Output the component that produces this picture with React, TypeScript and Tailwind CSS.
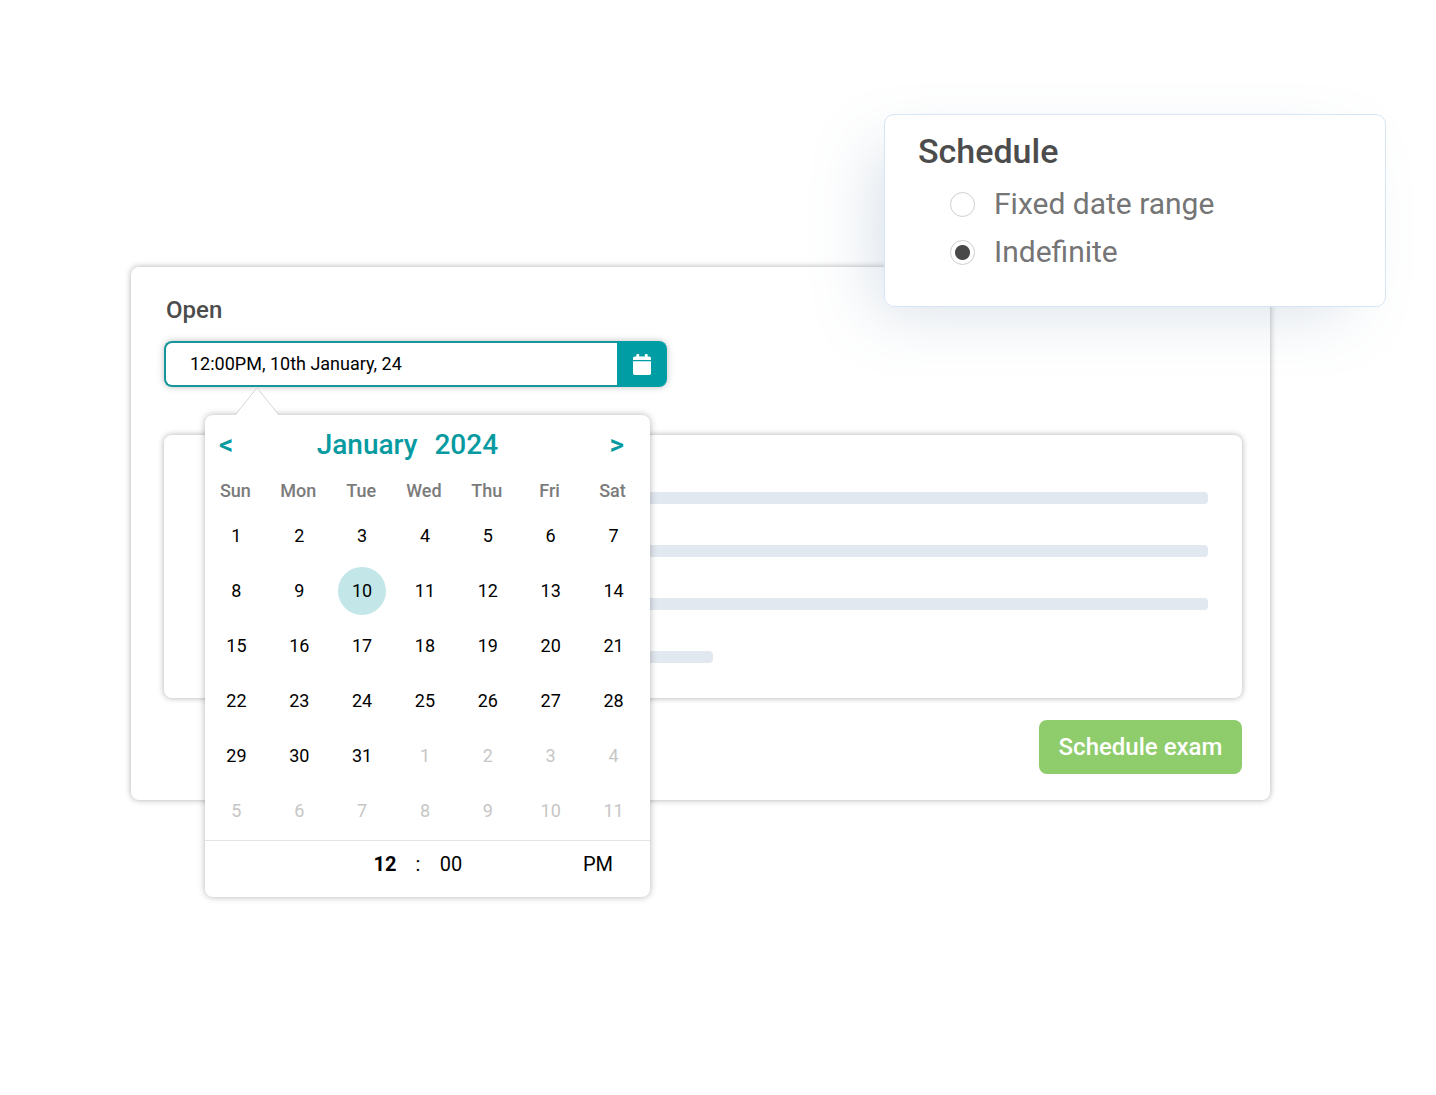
import { useState } from "react";

const weekdays = ["Sun", "Mon", "Tue", "Wed", "Thu", "Fri", "Sat"];

type Day = { day: number; outside: boolean };

const days: Day[] = Array.from({ length: 42 }, (_, i) => ({
  day: i < 31 ? i + 1 : i - 30,
  outside: i >= 31,
}));

const weeks = Array.from({ length: 6 }, (_, w) => days.slice(w * 7, w * 7 + 7));

function CalendarIcon() {
  return (
    <svg viewBox="0 0 18 21" className="h-[21px] w-[18px]" fill="currentColor" aria-hidden="true">
      <path d="M0 6V4.200Q0 2.400 1.800 2.400H3.300V1Q3.300 0 4.300 0h.9Q6.200 0 6.200 1V2.400h5.600V1q0-1 1-1h.9q1 0 1 1v1.400h1.500Q18 2.400 18 4.200V6Z" />
      <path d="M0 7.200h18v12q0 1.800-1.800 1.800H1.800Q0 21 0 19.200Z" />
    </svg>
  );
}

function DatePicker() {
  const [selected, setSelected] = useState(9);
  return (
    <div className="absolute left-[41px] top-[74px] z-10 w-[445px] rounded-lg bg-white shadow-[0_0_7px_rgba(0,0,0,0.3)]">
      <svg
        viewBox="0 0 44 28"
        className="absolute -top-[27px] left-[30px] h-7 w-11"
        aria-hidden="true"
      >
        <path d="M0 28 22 0 44 28Z" fill="#fff" />
        <path d="M0 27 22 0 44 27" fill="none" stroke="#d4d4d4" />
      </svg>
      <div className="flex h-[59px] items-center px-[14px] text-[#079ba1]">
        <button type="button" aria-label="Previous month" className="text-[28px] font-semibold">
          &lt;
        </button>
        <h2 className="flex flex-1 justify-center gap-[17px] pr-7 text-[28px] font-medium leading-8">
          <span>January</span>
          <span>2024</span>
        </h2>
        <button type="button" aria-label="Next month" className="mr-3 text-[28px] font-semibold">
          &gt;
        </button>
      </div>
      <div className="border-b border-[#e4e4e4] pb-[2px] pr-[5px]">
        <table className="w-full table-fixed border-collapse text-center text-lg">
          <thead>
            <tr className="h-[34px]">
              {weekdays.map((name) => (
                <th key={name} scope="col" className="p-0 pr-[2px] font-medium text-[#7b7b7b]">
                  {name}
                </th>
              ))}
            </tr>
          </thead>
          <tbody>
            {weeks.map((week, w) => (
              <tr key={w} className="h-[55px]">
                {week.map(({ day, outside }, d) => {
                  const index = w * 7 + d;
                  const tone = outside
                    ? "text-[#c6c6c6]"
                    : index === selected
                      ? "bg-[#c3e7e8] text-black"
                      : "text-black";
                  return (
                    <td key={d} className="p-0">
                      <button
                        type="button"
                        onClick={() => setSelected(index)}
                        className={`mx-auto flex size-12 items-center justify-center rounded-full ${tone}`}
                      >
                        {day}
                      </button>
                    </td>
                  );
                })}
              </tr>
            ))}
          </tbody>
        </table>
      </div>
      <div className="flex h-14 items-center pb-[10px] pl-[164px] pr-9 text-xl text-black">
        <input
          aria-label="Hour"
          defaultValue="12"
          className="w-8 bg-transparent text-center font-bold outline-none"
        />
        <span className="w-[34px] text-center">:</span>
        <input
          aria-label="Minute"
          defaultValue="00"
          className="w-8 bg-transparent text-center outline-none"
        />
        <select
          aria-label="AM or PM"
          defaultValue="PM"
          className="ml-auto appearance-none bg-transparent outline-none"
        >
          <option>AM</option>
          <option>PM</option>
        </select>
      </div>
    </div>
  );
}

function ScheduleCard() {
  const [mode, setMode] = useState("indefinite");
  const options = [
    { id: "fixed", label: "Fixed date range" },
    { id: "indefinite", label: "Indefinite" },
  ];
  return (
    <fieldset className="absolute -right-[116px] -top-[153px] z-20 h-[193px] w-[502px] rounded-[10px] border border-[#d5e5f5] bg-white pl-[33px] shadow-[-24px_20px_64px_-16px_rgba(100,130,165,0.25)]">
      <legend className="float-left w-full pt-4 text-[34px] font-medium leading-10 text-[#4c4c4c]">
        Schedule
      </legend>
      <div className="clear-both flex flex-col pl-8 pt-[9px]">
        {options.map(({ id, label }) => (
          <label key={id} className="flex h-12 items-center gap-[19px] text-3xl text-[#757575]">
            <input
              type="radio"
              name="schedule"
              checked={mode === id}
              onChange={() => setMode(id)}
              className="size-[25px] appearance-none rounded-full border border-[#cfcfcf] bg-white checked:bg-[radial-gradient(circle,#484848_7px,#ffffff_8px)]"
            />
            {label}
          </label>
        ))}
      </div>
    </fieldset>
  );
}

export default function App() {
  return (
    <main className="min-h-screen bg-white pb-16 pl-[131px] pr-[166px] pt-[267px] font-['Roboto',sans-serif]">
      <section className="relative rounded-lg bg-white pb-[26px] pl-[33px] pr-7 pt-[27px] shadow-[0_0_6px_rgba(0,0,0,0.32)]">
        <label htmlFor="open" className="block pl-[2px] text-2xl font-medium leading-8 text-[#4c4c4c]">
          Open
        </label>
        <div className="relative mt-[15px] flex h-[46px] w-[503px] rounded-lg shadow-[0_0_7px_rgba(0,0,0,0.25)]">
          <input
            id="open"
            defaultValue="12:00PM, 10th January, 24"
            className="min-w-0 flex-1 rounded-l-lg border-2 border-r-0 border-[#16969c] bg-white pl-6 text-lg text-black outline-none"
          />
          <button
            type="button"
            aria-label="Choose date"
            className="flex w-[50px] items-center justify-center rounded-r-lg bg-[#009da4] text-white"
          >
            <CalendarIcon />
          </button>
          <DatePicker />
        </div>

        <div className="mt-12 flex flex-col gap-[41px] rounded-lg bg-white pb-[35px] pl-16 pr-[34px] pt-[57px] shadow-[0_0_6px_rgba(0,0,0,0.32)]">
          <div className="h-3 rounded bg-[#e2e8f0]" />
          <div className="h-3 rounded bg-[#e2e8f0]" />
          <div className="h-3 rounded bg-[#e2e8f0]" />
          <div className="h-3 w-[485px] rounded bg-[#e2e8f0]" />
        </div>

        <div className="mt-[22px] flex justify-end">
          <button
            type="button"
            className="h-[54px] w-[203px] rounded-lg bg-[#8fcc6c] text-2xl font-medium text-white"
          >
            Schedule exam
          </button>
        </div>

        <ScheduleCard />
      </section>
    </main>
  );
}
